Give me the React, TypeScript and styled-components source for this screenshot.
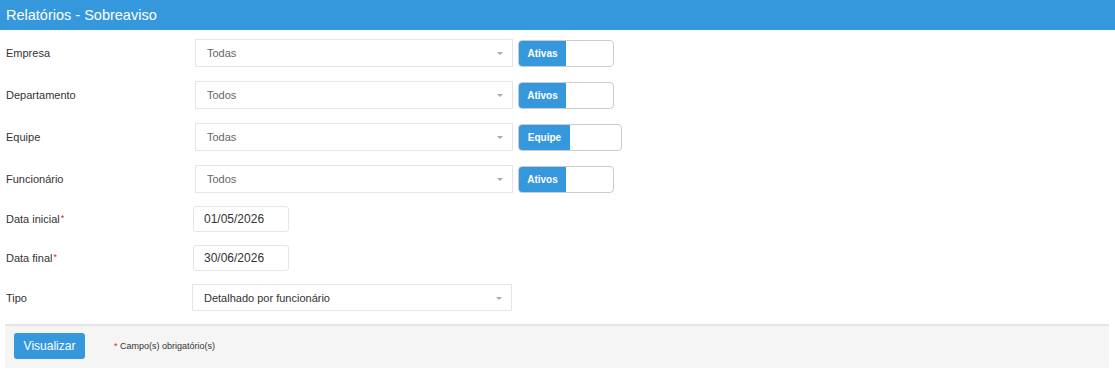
import styled, { createGlobalStyle } from 'styled-components'

const GlobalStyle = createGlobalStyle`
    body {
        margin: 0;
        background: #fff;
        font-family: "Liberation Sans", Arial, sans-serif;
        color: #333;
    }
`

const Header = styled.div`
    height: 30px;
    line-height: 30px;
    padding-left: 6px;
    background: #3598dc;
    color: #fff;
    font-size: 14.5px;
`

const Form = styled.form`
    display: flex;
    flex-direction: column;
    gap: 13px;
    padding-top: 9px;
`

const Filters = styled.div`
    display: flex;
    flex-direction: column;
    gap: 14px;
`

const Row = styled.div`
    display: flex;
    align-items: center;
`

const Label = styled.label`
    width: 189px;
    padding-left: 6px;
    flex-shrink: 0;
    font-size: 11px;
    color: #333;
`

const Required = styled.span`
    color: #e02222;
    font-size: 9px;
    vertical-align: top;
    margin-left: 1px;
`

const Select = styled.div<{ $width: number; $height: number; $offset?: number; $dark?: boolean }>`
    position: relative;
    box-sizing: border-box;
    width: ${p => p.$width}px;
    height: ${p => p.$height}px;
    margin-left: ${p => p.$offset ?? 0}px;
    padding-left: ${p => (p.$dark ? 11 : 11)}px;
    border: 1px solid #e5e5e5;
    display: flex;
    align-items: center;
    font-size: 11px;
    color: ${p => (p.$dark ? '#333' : '#666')};
`

const Caret = styled.span`
    position: absolute;
    right: 9px;
    top: 50%;
    margin-top: -1px;
    border-left: 3px solid transparent;
    border-right: 3px solid transparent;
    border-top: 3px solid #aaa;
`

const Toggle = styled.div<{ $half: number }>`
    box-sizing: border-box;
    display: flex;
    width: ${p => p.$half * 2 + 2}px;
    height: 27px;
    margin-left: 5px;
    border: 1px solid #ccc;
    border-radius: 4px;
    overflow: hidden;
`

const ToggleOn = styled.span<{ $half: number }>`
    width: ${p => p.$half}px;
    background: #3598dc;
    color: #fff;
    font-weight: bold;
    font-size: 10px;
    display: flex;
    align-items: center;
    justify-content: center;
`

const DateInput = styled.div`
    box-sizing: border-box;
    width: 96px;
    height: 26px;
    margin-left: -2px;
    padding-left: 10px;
    border: 1px solid #e5e5e5;
    border-radius: 3px;
    display: flex;
    align-items: center;
    font-size: 12px;
    color: #333;
`

const Footer = styled.div`
    display: flex;
    align-items: center;
    margin: 0 6px 0 5px;
    padding: 7px 9px 9px;
    background: #f5f5f5;
    border-top: 2px solid #e5e5e5;
    border-radius: 0 0 3px 3px;
`

const Button = styled.button`
    height: 26px;
    width: 71px;
    border: none;
    border-radius: 3px;
    background: #3598dc;
    color: #fff;
    font-family: "Liberation Sans", Arial, sans-serif;
    font-size: 12px;
    padding: 0;
`

const Note = styled.span`
    margin-left: 28px;
    font-size: 9px;
    color: #333;
`

type FilterRow = {
    label: string,
    value: string,
    toggle: string,
    half: number
}

const filters: FilterRow[] = [
    { label: 'Empresa', value: 'Todas', toggle: 'Ativas', half: 47 },
    { label: 'Departamento', value: 'Todos', toggle: 'Ativos', half: 47 },
    { label: 'Equipe', value: 'Todas', toggle: 'Equipe', half: 51 },
    { label: 'Funcionário', value: 'Todos', toggle: 'Ativos', half: 47 }
]

export default function App() {
    return (
        <>
            <GlobalStyle />
            <Header>Relatórios - Sobreaviso</Header>
            <Form onSubmit={(e) => e.preventDefault()}>
                <Filters>
                    {filters.map((f) => (
                        <Row key={f.label}>
                            <Label>{f.label}</Label>
                            <Select $width={318} $height={28}>
                                {f.value}
                                <Caret />
                            </Select>
                            <Toggle $half={f.half}>
                                <ToggleOn $half={f.half}>{f.toggle}</ToggleOn>
                            </Toggle>
                        </Row>
                    ))}
                </Filters>
                <Row>
                    <Label>Data inicial<Required>*</Required></Label>
                    <DateInput>01/05/2026</DateInput>
                </Row>
                <Row>
                    <Label>Data final<Required>*</Required></Label>
                    <DateInput>30/06/2026</DateInput>
                </Row>
                <Row>
                    <Label>Tipo</Label>
                    <Select $width={320} $height={27} $offset={-3} $dark>
                        Detalhado por funcionário
                        <Caret />
                    </Select>
                </Row>
                <Footer>
                    <Button type='submit'>Visualizar</Button>
                    <Note><Required>*</Required> Campo(s) obrigatório(s)</Note>
                </Footer>
            </Form>
        </>
    )
}
